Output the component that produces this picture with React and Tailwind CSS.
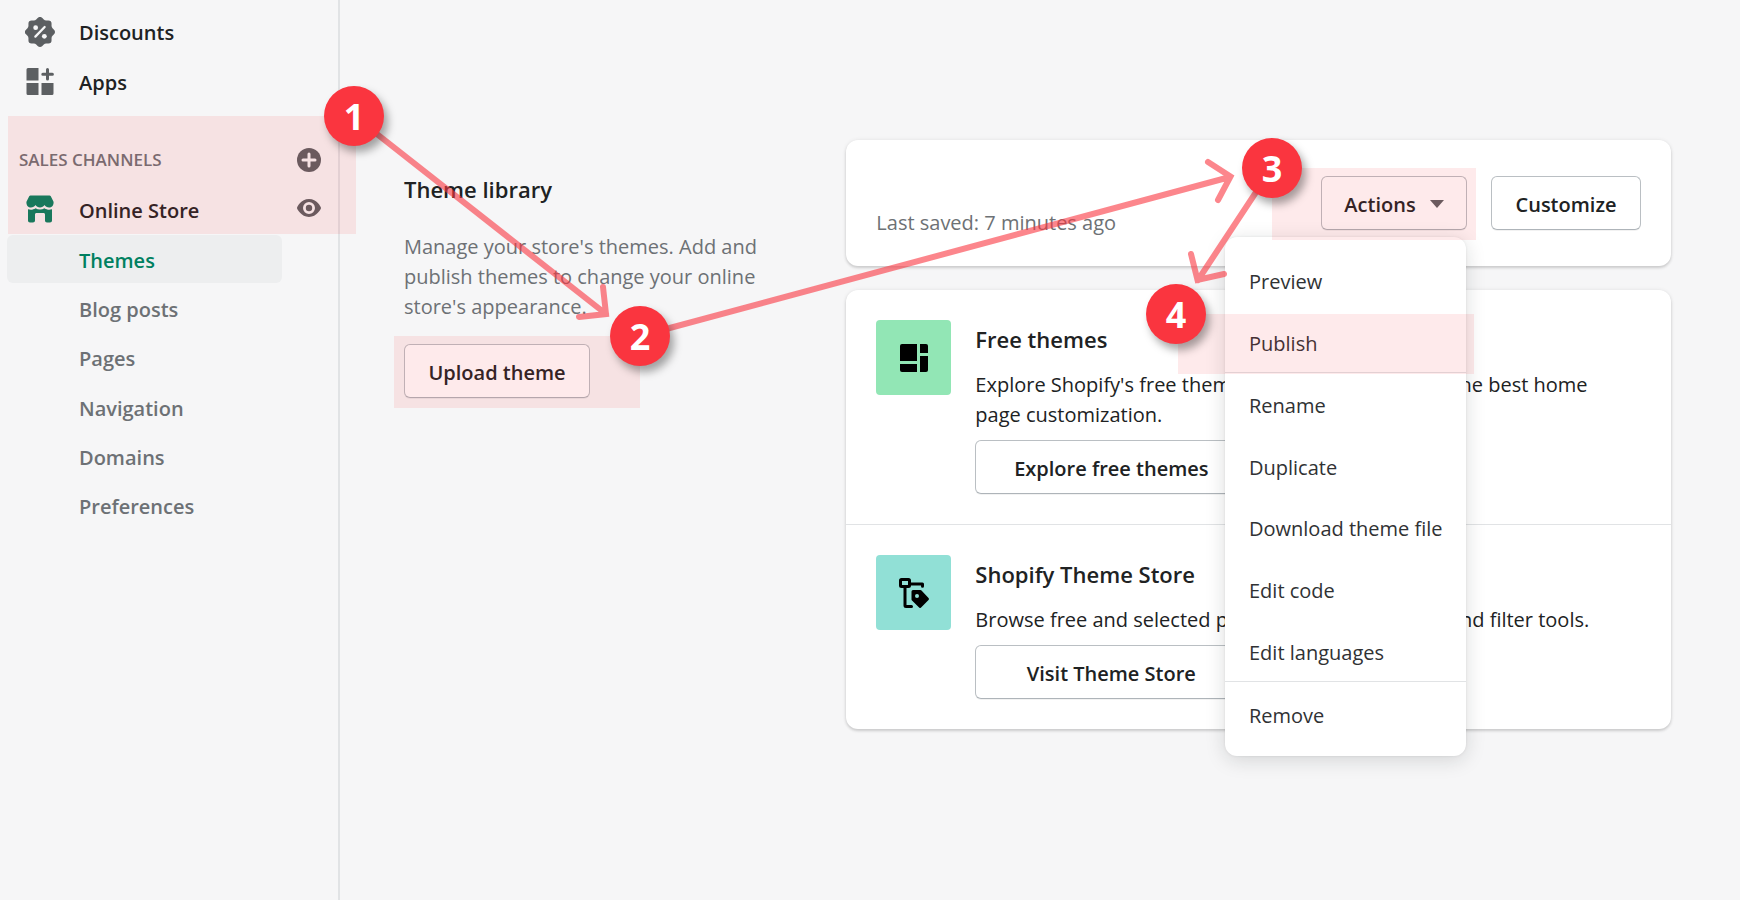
const body = "text-[20px] leading-[30px]";
const buttonBase =
  "h-[54px] rounded-md border border-[#babfc3] border-b-[#aeb4b9] bg-white pt-[3px] text-[20px] leading-[30px] font-semibold text-[#202223] shadow-[0_1px_0_rgba(0,0,0,0.05)] whitespace-nowrap";

function DiscountIcon() {
  return (
    <svg viewBox="0 0 20 20" className="size-[30px] shrink-0" aria-hidden="true">
      <path
        fill="#5c5f62"
        d="M11.566.66a2.189 2.189 0 0 0-3.132 0l-.962.985a2.189 2.189 0 0 1-1.592.66l-1.377-.017a2.189 2.189 0 0 0-2.215 2.215l.016 1.377a2.189 2.189 0 0 1-.66 1.592l-.984.962a2.189 2.189 0 0 0 0 3.132l.985.962c.428.418.667.994.66 1.592l-.017 1.377a2.189 2.189 0 0 0 2.215 2.215l1.377-.016a2.189 2.189 0 0 1 1.592.66l.962.984c.859.88 2.273.88 3.132 0l.962-.985a2.189 2.189 0 0 1 1.592-.66l1.377.017a2.189 2.189 0 0 0 2.215-2.215l-.016-1.377a2.189 2.189 0 0 1 .66-1.592l.984-.962c.88-.859.88-2.273 0-3.132l-.985-.962a2.189 2.189 0 0 1-.66-1.592l.017-1.377a2.189 2.189 0 0 0-2.215-2.215l-1.377.016a2.189 2.189 0 0 1-1.592-.66l-.962-.984z"
      />
      <path d="M6.9 13.1l6.2-6.4" stroke="#f6f6f7" strokeWidth="1.5" strokeLinecap="round" />
      <circle cx="7.1" cy="7.1" r="1.6" fill="#f6f6f7" />
      <circle cx="12.9" cy="12.9" r="1.6" fill="#f6f6f7" />
    </svg>
  );
}

function AppsIcon() {
  return (
    <svg viewBox="0 0 30 30" className="size-[30px] shrink-0" fill="#5c5f62" aria-hidden="true">
      <path d="M3 1h10.500v12.500H1.500V2.500A1.500 1.500 0 0 1 3 1z" />
      <path d="M1.500 16h12v12H3A1.500 1.500 0 0 1 1.500 26.500z" />
      <path d="M16.500 16h12v10.500A1.500 1.500 0 0 1 27 28H16.500z" />
      <path d="M22.500 2.500v9.500M17.800 7.200h9.600" stroke="#5c5f62" strokeWidth="3" strokeLinecap="round" />
    </svg>
  );
}

function StoreIcon() {
  return (
    <svg viewBox="0 0 30 30" className="size-[30px] shrink-0" fill="#008060" aria-hidden="true">
      <path d="M5.500.500h19c.6 0 1 .3 1.300.8l2.500 5c.2.300.300.700.300 1.100 0 2.900-1.900 5.100-4.500 5.100-2 0-3.700-1-4.600-2.500-.9 1.600-2.600 2.500-4.500 2.500s-3.600-.9-4.500-2.500c-.9 1.500-2.600 2.500-4.600 2.500-2.600 0-4.500-2.200-4.500-5.100 0-.4.100-.8.300-1.100l2.500-5c.3-.5.700-.8 1.300-.8z" />
      <path d="M3 14.200c2.800.9 5.300.5 7.500-1 2.700 1.700 6.300 1.700 9 0 2.200 1.500 4.700 1.900 7.500 1V25.500c0 1.200-.8 2-2 2h-3c-1.200 0-2-.8-2-2V19.500c0-.9-.6-1.500-1.500-1.500h-7c-.9 0-1.500.6-1.500 1.500v6c0 1.200-.8 2-2 2H5c-1.200 0-2-.8-2-2z" />
    </svg>
  );
}

function PlusIcon() {
  return (
    <svg viewBox="0 0 24 24" className="size-6" aria-hidden="true">
      <circle cx="12" cy="12" r="12" fill="#5c5f62" />
      <path d="M12 6v12M6 12h12" stroke="#f6f6f7" strokeWidth="3" strokeLinecap="round" />
    </svg>
  );
}

function EyeIcon() {
  return (
    <svg viewBox="0 0 24 24" className="size-6" aria-hidden="true">
      <path
        fill="#5c5f62"
        fillRule="evenodd"
        d="M23.900 11.400C23.800 11 20 3 12 3S.2 11 .1 11.400c-.1.400-.1.800 0 1.200C.2 13 4 21 12 21s11.800-8 11.900-8.400c.1-.4.100-.8 0-1.200zM12 18a6 6 0 1 1 0-12 6 6 0 0 1 0 12z"
      />
      <circle cx="12" cy="12" r="3.200" fill="#5c5f62" />
    </svg>
  );
}

function ThemesIcon() {
  return (
    <svg viewBox="0 0 28 28" className="size-7" aria-hidden="true">
      <path d="M2 0h15v17H0V2a2 2 0 0 1 2-2z" />
      <path d="M0 20h17v8H2a2 2 0 0 1-2-2z" />
      <path d="M20 0h6a2 2 0 0 1 2 2v7h-8z" />
      <path d="M20 12h8v14a2 2 0 0 1-2 2h-6z" />
    </svg>
  );
}

function ThemeStoreIcon() {
  return (
    <svg viewBox="0 0 30 30" className="size-[30px]" aria-hidden="true">
      <rect x="1.500" y="1.500" width="9" height="7" rx="1" fill="none" stroke="#000" strokeWidth="3" />
      <path d="M12 6h11.500v2.300M6 10v17.500q0 1 1 1h5.500" fill="none" stroke="#000" strokeWidth="3" strokeLinecap="round" strokeLinejoin="round" />
      <path
        fillRule="evenodd"
        d="M14 12h7.500a1.500 1.500 0 0 1 1 .4l7 7.600a1.500 1.500 0 0 1 0 2l-7.400 7.600a1.500 1.500 0 0 1-2 0l-7.100-7.200a1.500 1.500 0 0 1-.5-1V13.500a1.500 1.500 0 0 1 1.500-1.500zm4 4a2 2 0 1 0 0 4 2 2 0 0 0 0-4z"
      />
    </svg>
  );
}

function NavLink({ icon, children }) {
  return (
    <a href="#" className="flex h-[50px] flex-1 items-center gap-6 pl-[25px] text-[20px] leading-[30px] font-semibold text-[#202223]">
      {icon}
      <span className="pt-[2px]">{children}</span>
    </a>
  );
}

const subNav = ["Themes", "Blog posts", "Pages", "Navigation", "Domains", "Preferences"];

function Sidebar() {
  return (
    <nav className="w-[340px] shrink-0 border-r-2 border-[#e1e3e5] pt-[7px]">
      <NavLink icon={<DiscountIcon />}>Discounts</NavLink>
      <NavLink icon={<AppsIcon />}>Apps</NavLink>
      <div className="mt-7 flex h-[50px] items-center justify-between pr-[17px] pl-[19px]">
        <h2 className="text-[17px] leading-[30px] font-semibold text-[#6d7175]">SALES CHANNELS</h2>
        <button type="button" aria-label="Add sales channel">
          <PlusIcon />
        </button>
      </div>
      <div className="flex items-center justify-between pr-[17px]">
        <NavLink icon={<StoreIcon />}>Online Store</NavLink>
        <button type="button" aria-label="View online store" className="pb-1">
          <EyeIcon />
        </button>
      </div>
      <ul className="mr-14 ml-[7px] flex h-[295px] flex-col justify-between">
        {subNav.map((label, i) => (
          <li key={label}>
            <a
              href="#"
              className={
                "flex h-12 items-center rounded-md pt-[3px] pl-[72px] text-[20px] leading-[30px] font-semibold " +
                (i === 0 ? "bg-[#edeeef] text-[#008060]" : "text-[#6d7175]")
              }
            >
              {label}
            </a>
          </li>
        ))}
      </ul>
    </nav>
  );
}

const menuSections = [
  { items: ["Preview", "Publish"], size: "h-[123px]" },
  { items: ["Rename", "Duplicate", "Download theme file", "Edit code", "Edit languages"], size: "h-[309px] border-t" },
  { items: ["Remove"], size: "h-[63px] border-t" },
];

function ActionsMenu() {
  return (
    <div className="absolute top-full right-px z-10 mt-[7px] w-[241px] rounded-xl bg-white py-3 shadow-[0_0_3px_rgba(23,24,24,0.08),0_4px_20px_rgba(23,24,24,0.15)]">
      {menuSections.map(({ items, size }) => (
        <ul key={items[0]} className={"grid auto-rows-fr border-[#e1e3e5] " + size}>
          {items.map((item) => (
            <li key={item} className="grid">
              <button type="button" className="pt-[5px] pl-6 text-left text-[20px] leading-[30px] whitespace-nowrap text-[#303234]">
                {item}
              </button>
            </li>
          ))}
        </ul>
      ))}
    </div>
  );
}

function ThemeSource({ icon, tile, title, text, action }) {
  return (
    <section className="flex gap-6 p-[30px]">
      <div className={"flex size-[75px] shrink-0 items-center justify-center rounded " + tile}>{icon}</div>
      <div className="min-w-0 flex-1">
        <h3 className="mb-3 text-[22px] leading-[38px] font-semibold">{title}</h3>
        <p className={"pr-4 " + body}>{text}</p>
        <button type="button" className={"mt-[10px] w-[272px] " + buttonBase}>
          {action}
        </button>
      </div>
    </section>
  );
}

const cardShadow = "rounded-xl bg-white shadow-[0_0_4px_rgba(23,24,24,0.08),0_2px_3px_rgba(0,0,0,0.15)]";

const badgeBase =
  "absolute flex size-[60px] items-center justify-center rounded-full bg-[#fa353f] pt-px text-[36px] leading-none font-bold text-white shadow-[4px_6px_8px_rgba(0,0,0,0.35)]";

function Annotations() {
  return (
    <div className="pointer-events-none absolute inset-0 z-20 overflow-hidden">
      <div className="absolute top-[116px] left-2 h-[118px] w-[348px] bg-[#fa353f]/10" />
      <div className="absolute top-[336px] left-[394px] h-[72px] w-[246px] bg-[#fa353f]/10" />
      <div className="absolute top-[168px] left-[1272px] h-[72px] w-[204px] bg-[#fa353f]/10" />
      <div className="absolute top-[314px] left-[1178px] h-[60px] w-[296px] bg-[#fa353f]/10" />
      <svg
        width="1740"
        height="900"
        viewBox="0 0 1740 900"
        className="absolute top-0 left-0"
        fill="none"
        stroke="#fa353f"
        strokeWidth="6"
        strokeLinecap="round"
        aria-hidden="true"
      >
        <path opacity="0.6" d="M354 116L606 314M603 287L606 314L579 317" />
        <path opacity="0.6" d="M640 336L1230 177M1208 162L1230.500 176.500L1218 200" />
        <path opacity="0.6" d="M1272 168L1198 280M1191 254L1197.500 280L1224 274" />
      </svg>
      <span className={"top-[86px] left-[324px] " + badgeBase}>1</span>
      <span className={"top-[306px] left-[610px] " + badgeBase}>2</span>
      <span className={"top-[138px] left-[1242px] " + badgeBase}>3</span>
      <span className={"top-[284px] left-[1146px] " + badgeBase}>4</span>
    </div>
  );
}

export default function App() {
  return (
    <div className="relative flex min-h-screen bg-[#f6f6f7] font-['Open_Sans','Noto_Sans',sans-serif] text-[#202223]">
      <Sidebar />
      <main className="grid flex-1 grid-cols-[1fr_2fr] items-start gap-[30px] pt-[140px] pr-[69px] pl-16">
        <section className="pt-8 pr-8">
          <h2 className="text-[22px] leading-[34px] font-semibold">Theme library</h2>
          <p className={"mt-[26px] mb-[22px] text-[#6d7175] " + body}>
            Manage your store's themes. Add and publish themes to change your online store's appearance.
          </p>
          <button type="button" className={"w-[186px] " + buttonBase}>
            Upload theme
          </button>
        </section>
        <div className="flex flex-col gap-6">
          <section className={"flex h-[126px] items-center px-[30px] " + cardShadow}>
            <p className={"flex-1 self-end pb-7 text-[#6d7175] " + body}>Last saved: 7 minutes ago</p>
            <div className="flex gap-6">
              <div className="relative">
                <button type="button" aria-haspopup="menu" aria-expanded="true" className={"flex w-[146px] items-center justify-center gap-[14px] " + buttonBase}>
                  Actions
                  <svg viewBox="0 0 14 10" className="h-[10px] w-[14px]" aria-hidden="true">
                    <path d="M0 0h14L7 8z" fill="#5c5f62" />
                  </svg>
                </button>
                <ActionsMenu />
              </div>
              <button type="button" className={"w-[150px] " + buttonBase}>
                Customize
              </button>
            </div>
          </section>
          <div className={"divide-y divide-[#e1e3e5] " + cardShadow}>
            <ThemeSource
              icon={<ThemesIcon />}
              tile="bg-[#92e6b5]"
              title="Free themes"
              text="Explore Shopify's free themes, designed to provide the best home page customization."
              action="Explore free themes"
            />
            <ThemeSource
              icon={<ThemeStoreIcon />}
              tile="bg-[#91e0d6]"
              title="Shopify Theme Store"
              text="Browse free and selected paid themes with search and filter tools."
              action="Visit Theme Store"
            />
          </div>
        </div>
      </main>
      <Annotations />
    </div>
  );
}
